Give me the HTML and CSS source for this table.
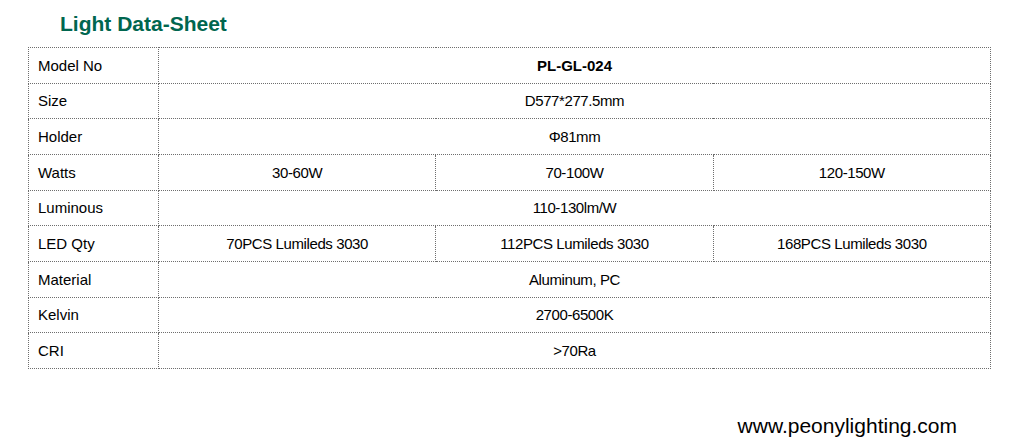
FILE: index.html
```html
<!DOCTYPE html>
<html>
<head>
<meta charset="utf-8">
<link rel="stylesheet" href="styles.css">
</head>
<body>
<div class="page">
  <h1 class="title">Light Data-Sheet</h1>
  <table class="sheet">
    <colgroup>
      <col class="c-label">
      <col class="c-val">
      <col class="c-val">
      <col class="c-val">
    </colgroup>
    <tr><td class="label">Model No</td><td class="val bold" colspan="3">PL-GL-024</td></tr>
    <tr><td class="label">Size</td><td class="val" colspan="3">D577*277.5mm</td></tr>
    <tr><td class="label">Holder</td><td class="val" colspan="3">Φ81mm</td></tr>
    <tr><td class="label">Watts</td><td class="val">30-60W</td><td class="val">70-100W</td><td class="val">120-150W</td></tr>
    <tr><td class="label">Luminous</td><td class="val" colspan="3">110-130lm/W</td></tr>
    <tr><td class="label">LED Qty</td><td class="val">70PCS Lumileds 3030</td><td class="val">112PCS Lumileds 3030</td><td class="val">168PCS Lumileds 3030</td></tr>
    <tr><td class="label">Material</td><td class="val" colspan="3">Aluminum, PC</td></tr>
    <tr><td class="label">Kelvin</td><td class="val" colspan="3">2700-6500K</td></tr>
    <tr><td class="label">CRI</td><td class="val" colspan="3">&gt;70Ra</td></tr>
  </table>
  <div class="footer">www.peonylighting.com</div>
</div>
</body>
</html>
```

FILE: styles.css
```css
html, body {
  margin: 0;
  padding: 0;
  background: #ffffff;
}
.page {
  width: 1015px;
  height: 447px;
  font-family: "Liberation Sans", Arial, sans-serif;
  color: #000;
}
.title {
  margin: 0;
  padding: 12px 0 0 60px;
  height: 24px;
  font-size: 21px;
  line-height: 24px;
  font-weight: bold;
  color: #00664f;
}
.sheet {
  margin: 11px 0 0 28px;
  width: 963px;
  border-collapse: collapse;
  table-layout: fixed;
  font-size: 15px;
}
.c-label { width: 130px; }
.sheet td {
  border: 1px dotted #6e6e6e;
  height: 34.67px;
  padding: 0;
  vertical-align: middle;
}
.label {
  padding-left: 9px !important;
  text-align: left;
}
.val {
  text-align: center;
  letter-spacing: -0.4px;
}
.bold {
  font-weight: bold;
  letter-spacing: 0;
}
.footer {
  margin-top: 45px;
  padding-right: 58px;
  text-align: right;
  font-size: 21px;
  line-height: 24px;
}
```
